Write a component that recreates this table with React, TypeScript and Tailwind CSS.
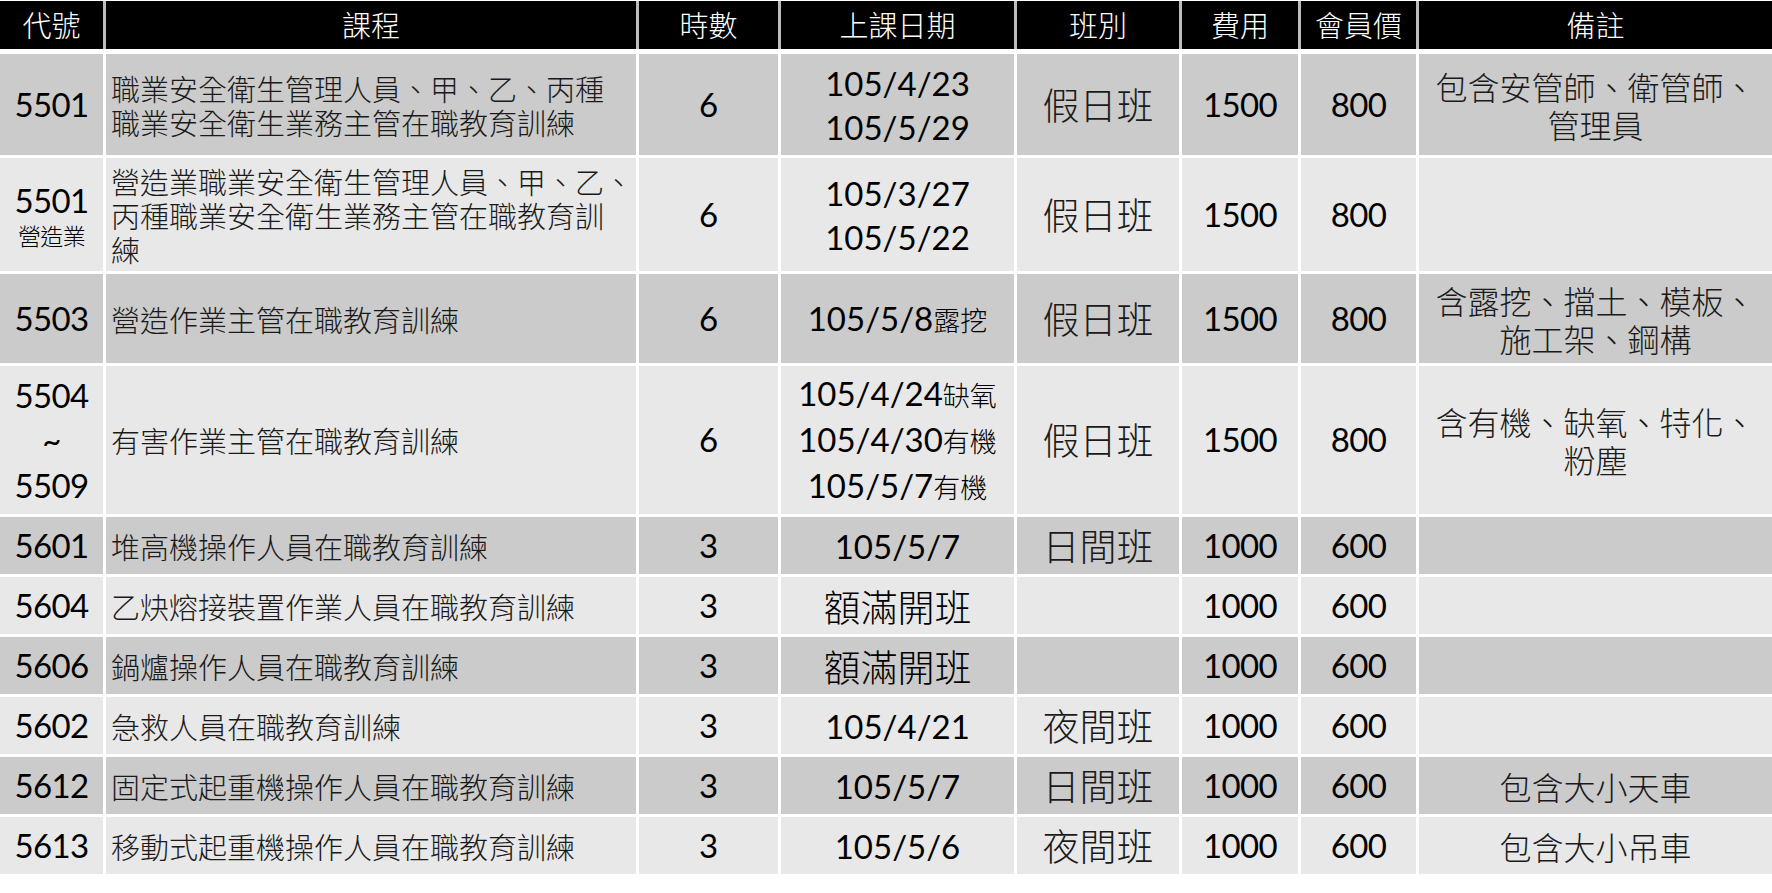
import React from 'react';

type Row = {
  code: React.ReactNode;
  course: string[];
  hours: string;
  dates: [string, string?][] | 'full';
  cls: string;
  fee: string;
  member: string;
  note: string[];
};

const CJK = "font-['Noto_Sans_CJK_TC',sans-serif]";
const NUM = "font-['Lato','Noto_Sans_CJK_TC',sans-serif]";

const rows: Row[] = [
  {
    code: '5501',
    course: ['職業安全衛生管理人員、甲、乙、丙種', '職業安全衛生業務主管在職教育訓練'],
    hours: '6',
    dates: [['105/4/23'], ['105/5/29']],
    cls: '假日班',
    fee: '1500',
    member: '800',
    note: ['包含安管師、衛管師、', '管理員'],
  },
  {
    code: (
      <div className="flex flex-col items-center">
        <span className="leading-[40px]">5501</span>
        <span className={`${CJK} text-[23px] leading-[30px] font-light`}>營造業</span>
      </div>
    ),
    course: ['營造業職業安全衛生管理人員、甲、乙、', '丙種職業安全衛生業務主管在職教育訓', '練'],
    hours: '6',
    dates: [['105/3/27'], ['105/5/22']],
    cls: '假日班',
    fee: '1500',
    member: '800',
    note: [],
  },
  {
    code: '5503',
    course: ['營造作業主管在職教育訓練'],
    hours: '6',
    dates: [['105/5/8', '露挖']],
    cls: '假日班',
    fee: '1500',
    member: '800',
    note: ['含露挖、擋土、模板、', '施工架、鋼構'],
  },
  {
    code: (
      <div className="flex flex-col items-center leading-[45px]">
        <span>5504</span>
        <span>~</span>
        <span>5509</span>
      </div>
    ),
    course: ['有害作業主管在職教育訓練'],
    hours: '6',
    dates: [['105/4/24', '缺氧'], ['105/4/30', '有機'], ['105/5/7', '有機']],
    cls: '假日班',
    fee: '1500',
    member: '800',
    note: ['含有機、缺氧、特化、', '粉塵'],
  },
  { code: '5601', course: ['堆高機操作人員在職教育訓練'], hours: '3', dates: [['105/5/7']], cls: '日間班', fee: '1000', member: '600', note: [] },
  { code: '5604', course: ['乙炔熔接裝置作業人員在職教育訓練'], hours: '3', dates: 'full', cls: '', fee: '1000', member: '600', note: [] },
  { code: '5606', course: ['鍋爐操作人員在職教育訓練'], hours: '3', dates: 'full', cls: '', fee: '1000', member: '600', note: [] },
  { code: '5602', course: ['急救人員在職教育訓練'], hours: '3', dates: [['105/4/21']], cls: '夜間班', fee: '1000', member: '600', note: [] },
  { code: '5612', course: ['固定式起重機操作人員在職教育訓練'], hours: '3', dates: [['105/5/7']], cls: '日間班', fee: '1000', member: '600', note: ['包含大小天車'] },
  { code: '5613', course: ['移動式起重機操作人員在職教育訓練'], hours: '3', dates: [['105/5/6']], cls: '夜間班', fee: '1000', member: '600', note: ['包含大小吊車'] },
];

const headers = ['代號', '課程', '時數', '上課日期', '班別', '費用', '會員價', '備註'];

export default function App() {
  return (
    <div className="w-[1772px] h-[893px] bg-white pt-[1px] text-black overflow-hidden">
      {/* header */}
      <div className="grid grid-cols-[103px_530px_139px_233px_162px_116px_115px_353px] gap-x-[3px] h-[48px] bg-[#bdbdbd]">
        {headers.map((h) => (
          <div key={h} className={`bg-black text-white flex items-center justify-center ${CJK} font-light text-[29px]`}>
            {h}
          </div>
        ))}
      </div>

      {/* body */}
      <div className="mt-[5px] grid grid-cols-[103px_530px_139px_233px_162px_116px_115px_353px] grid-rows-[101px_113px_89px_148px_repeat(6,57px)] gap-[3px]">
        {rows.map((r, i) => {
          const bg = i % 2 === 0 ? 'bg-[#cbcbcb]' : 'bg-[#e8e8e8]';
          return (
            <React.Fragment key={i}>
              <div className={`${bg} flex items-center justify-center ${NUM} text-[33px] tracking-[-0.02em]`}>{r.code}</div>
              <div className={`${bg} flex flex-col justify-center pl-[5px] ${CJK} font-light text-[29px] leading-[34px] whitespace-nowrap text-[#1a1a1a]`}>
                {r.course.map((c, k) => (
                  <span key={k} className="block">{c}</span>
                ))}
              </div>
              <div className={`${bg} flex items-center justify-center ${NUM} text-[33px]`}>{r.hours}</div>
              <div className={`${bg} flex flex-col items-center justify-center ${NUM} text-[33px] leading-[44px] whitespace-nowrap`}>
                {r.dates === 'full' ? (
                  <span className={`${CJK} font-light text-[37px]`}>額滿開班</span>
                ) : (
                  r.dates.map(([d, s], k) => (
                    <span key={k} className="block">
                      {d}
                      {s && <span className={`${CJK} font-light text-[27px]`}>{s}</span>}
                    </span>
                  ))
                )}
              </div>
              <div className={`${bg} flex items-center justify-center ${CJK} font-light text-[37px] text-[#1a1a1a]`}>{r.cls}</div>
              <div className={`${bg} flex items-center justify-center ${NUM} text-[33px] tracking-[-0.02em]`}>{r.fee}</div>
              <div className={`${bg} flex items-center justify-center ${NUM} text-[33px] tracking-[-0.02em]`}>{r.member}</div>
              <div className={`${bg} flex flex-col items-center justify-center ${CJK} font-light text-[32px] leading-[38px] whitespace-nowrap text-[#1a1a1a]`}>
                {r.note.map((n, k) => (
                  <span key={k} className="block">{n}</span>
                ))}
              </div>
            </React.Fragment>
          );
        })}
      </div>
    </div>
  );
}
